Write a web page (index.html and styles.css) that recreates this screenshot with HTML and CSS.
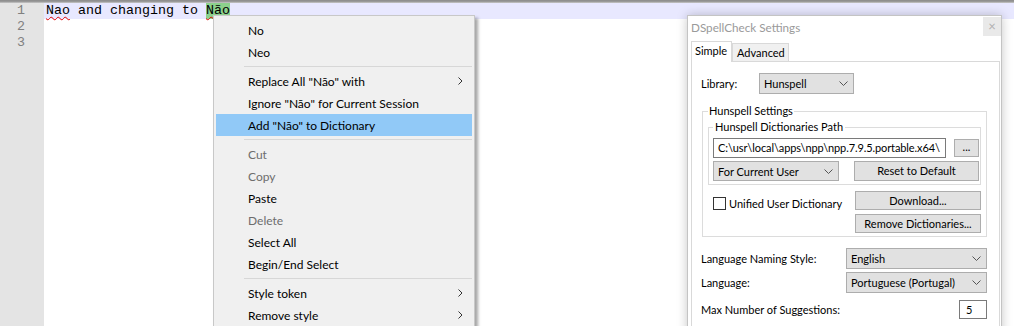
FILE: index.html
```html
<!DOCTYPE html>
<html>
<head>
<meta charset="utf-8">
<link rel="stylesheet" href="styles.css">
</head>
<body>
<div class="topbar"></div>
<div class="editor">
  <div class="gutter">
    <div class="ln">1</div>
    <div class="ln">2</div>
    <div class="ln">3</div>
  </div>
  <div class="code">
    <div class="line cur"><span class="err">Nao</span> and changing to <span class="hl"><span class="err">Não</span></span></div>
    <div class="line"></div>
    <div class="line"></div>
  </div>
</div>

<div class="menu">
  <div class="mi">No</div>
  <div class="mi">Neo</div>
  <div class="sep"></div>
  <div class="mi">Replace All "Não" with<svg class="arr" width="5" height="8" viewBox="0 0 5 8"><polyline points="0.5,0.5 4,4 0.5,7.5" fill="none" stroke="#333" stroke-width="1"/></svg></div>
  <div class="mi">Ignore "Não" for Current Session</div>
  <div class="mi sel">Add "Não" to Dictionary</div>
  <div class="sep"></div>
  <div class="mi dis">Cut</div>
  <div class="mi dis">Copy</div>
  <div class="mi">Paste</div>
  <div class="mi dis">Delete</div>
  <div class="mi">Select All</div>
  <div class="mi">Begin/End Select</div>
  <div class="sep"></div>
  <div class="mi">Style token<svg class="arr" width="5" height="8" viewBox="0 0 5 8"><polyline points="0.5,0.5 4,4 0.5,7.5" fill="none" stroke="#333" stroke-width="1"/></svg></div>
  <div class="mi">Remove style<svg class="arr" width="5" height="8" viewBox="0 0 5 8"><polyline points="0.5,0.5 4,4 0.5,7.5" fill="none" stroke="#333" stroke-width="1"/></svg></div>
</div>

<div class="dlg">
  <div class="titlebar">
    <div class="title">DSpellCheck Settings</div>
    <div class="close">×</div>
  </div>
  <div class="tabs">
    <div class="tab sel">Simple</div>
    <div class="tab adv">Advanced</div>
  </div>
  <div class="panel">
    <div class="row-lib">
      <div class="lib-label">Library:</div>
      <div class="combo lib-combo"><span>Hunspell</span><svg class="chev" width="9" height="5" viewBox="0 0 9 5"><polyline points="0.5,0.5 4.5,4.5 8.5,0.5" fill="none" stroke="#555" stroke-width="1"/></svg></div>
    </div>
    <fieldset class="grp outer">
      <legend>Hunspell Settings</legend>
      <fieldset class="grp inner">
        <legend>Hunspell Dictionaries Path</legend>
        <div class="path-row">
          <div class="input path">C:\usr\local\apps\npp\npp.7.9.5.portable.x64\</div>
          <div class="btn dots">...</div>
        </div>
        <div class="user-row">
          <div class="combo user-combo"><span>For Current User</span><svg class="chev" width="9" height="5" viewBox="0 0 9 5"><polyline points="0.5,0.5 4.5,4.5 8.5,0.5" fill="none" stroke="#555" stroke-width="1"/></svg></div>
          <div class="btn reset">Reset to Default</div>
        </div>
      </fieldset>
      <div class="dl-row">
        <div class="chk-wrap"><div class="chk"></div><span>Unified User Dictionary</span></div>
        <div class="btn-col">
          <div class="btn wide">Download...</div>
          <div class="btn wide">Remove Dictionaries...</div>
        </div>
      </div>
    </fieldset>
    <div class="opt-row first">
      <div>Language Naming Style:</div>
      <div class="combo opt-combo"><span>English</span><svg class="chev" width="9" height="5" viewBox="0 0 9 5"><polyline points="0.5,0.5 4.5,4.5 8.5,0.5" fill="none" stroke="#555" stroke-width="1"/></svg></div>
    </div>
    <div class="opt-row second">
      <div>Language:</div>
      <div class="combo opt-combo"><span>Portuguese (Portugal)</span><svg class="chev" width="9" height="5" viewBox="0 0 9 5"><polyline points="0.5,0.5 4.5,4.5 8.5,0.5" fill="none" stroke="#555" stroke-width="1"/></svg></div>
    </div>
    <div class="opt-row third">
      <div>Max Number of Suggestions:</div>
      <div class="input num">5</div>
    </div>
  </div>
</div>
</body>
</html>
```

FILE: styles.css
```css
html, body {
  margin: 0;
  padding: 0;
}
body {
  width: 1014px;
  height: 326px;
  overflow: hidden;
  position: relative;
  background: #fff;
  font-family: Lato, "Noto Sans", sans-serif;
  font-size: 12px;
  color: #000;
}
.topbar {
  height: 3px;
  background: linear-gradient(#8a8a8a, #9c9c9c 60%, #cfcfcf);
}
.editor {
  display: flex;
  height: 323px;
}
.gutter {
  width: 44px;
  background: #e4e4e4;
  font-family: "Liberation Mono", monospace;
  font-size: 13.33px;
  color: #808080;
}
.ln {
  width: 25px;
  height: 16px;
  line-height: 16px;
  text-align: right;
}
.code {
  flex: 1;
  font-family: "Liberation Mono", monospace;
  font-size: 13.33px;
  color: #000;
}
.line {
  height: 16px;
  line-height: 16px;
  padding-left: 2px;
  white-space: pre;
}
.line.cur {
  background: #e8e8ff;
}
.hl {
  background: #8cd18c;
  display: inline-block;
  height: 16px;
}
.err {
  text-decoration: underline wavy #e00000;
  text-decoration-thickness: 1px;
  text-underline-offset: 2px;
}

/* context menu */
.menu {
  position: absolute;
  left: 213px;
  top: 15px;
  width: 262px;
  height: 330px;
  box-sizing: border-box;
  background: #f0f0f0;
  border: 1px solid #c8c8c8;
  padding: 3px 2px;
  box-shadow: 3px 3px 3px rgba(0, 0, 0, 0.35);
}
.mi {
  height: 22px;
  display: flex;
  align-items: center;
  justify-content: space-between;
  padding: 0 9px 0 32px;
  white-space: nowrap;
}
.mi.sel {
  background: #91c9f7;
}
.mi.dis {
  color: #6d6d6d;
}
.sep {
  height: 1px;
  background: #d7d7d7;
  margin: 3px 0 3px 28px;
}
.arr {
  display: block;
}

/* dialog */
.dlg {
  position: absolute;
  left: 687px;
  top: 15px;
  width: 315px;
  height: 330px;
  box-sizing: border-box;
  background: #fff;
  border: 1px solid #c4c4c4;
  box-shadow: 0 0 10px rgba(0, 0, 0, 0.22);
  font-size: 11px;
}
.titlebar {
  height: 25px;
  display: flex;
  justify-content: space-between;
  align-items: flex-start;
  padding-left: 3px;
}
.title {
  line-height: 22px;
  font-size: 11.7px;
  color: #9a9a9a;
}
.close {
  width: 18px;
  height: 19px;
  margin-top: 1px;
  background: #e9e9e9;
  color: #b0b0b0;
  font-size: 13px;
  line-height: 18px;
  text-align: center;
}
.tabs {
  display: flex;
  align-items: flex-end;
  height: 20px;
  padding-left: 3px;
}
.tab {
  box-sizing: border-box;
  border: 1px solid #d9d9d9;
  border-bottom: none;
  white-space: nowrap;
}
.tab.sel {
  position: relative;
  z-index: 1;
  width: 41px;
  height: 21px;
  margin-bottom: -1px;
  padding-left: 3px;
  line-height: 18px;
  background: #fff;
}
.tab.adv {
  width: 57px;
  height: 18px;
  padding-left: 4px;
  line-height: 17px;
  background: #f0f0f0;
}
.panel {
  margin-left: 3px;
  width: 309px;
  height: 280px;
  box-sizing: border-box;
  border: 1px solid #d9d9d9;
  background: #fff;
  padding: 11px 12px 0 9px;
}
.row-lib {
  display: flex;
  align-items: center;
}
.lib-label {
  width: 58px;
}
.combo {
  box-sizing: border-box;
  display: flex;
  align-items: center;
  justify-content: space-between;
  background: #e1e1e1;
  border: 1px solid #adadad;
  padding: 0 5px 0 4px;
  white-space: nowrap;
}
.chev {
  display: block;
}
.lib-combo {
  width: 95px;
  height: 21px;
}
.grp {
  border: 1px solid #dcdcdc;
  margin: 0;
  min-width: 0;
}
.grp legend {
  padding: 0 1px;
  line-height: 16px;
}
.outer {
  margin: 9px 0 0 1px;
  padding: 0 5px 3px 5px;
}
.inner {
  padding: 3px 1px 3px 4px;
}
.inner legend {
  padding: 0 2px;
}
.path-row, .user-row {
  display: flex;
  justify-content: space-between;
  align-items: center;
}
.user-row {
  margin-top: 3px;
}
.input {
  box-sizing: border-box;
  background: #fff;
  border: 1px solid #7a7a7a;
  white-space: nowrap;
  overflow: hidden;
}
.path {
  width: 233px;
  height: 20px;
  line-height: 18px;
  padding-left: 4px;
  letter-spacing: -0.1px;
}
.btn {
  box-sizing: border-box;
  background: #e1e1e1;
  border: 1px solid #adadad;
  text-align: center;
  white-space: nowrap;
}
.dots {
  width: 25px;
  height: 18px;
  line-height: 14px;
}
.user-combo {
  width: 126px;
  height: 20px;
}
.reset {
  width: 125px;
  height: 20px;
  line-height: 18px;
}
.dl-row {
  display: flex;
  justify-content: space-between;
  margin-top: 6px;
}
.chk-wrap {
  display: flex;
  align-items: center;
  margin: 6px 0 0 5px;
  height: 13px;
}
.chk {
  width: 13px;
  height: 13px;
  box-sizing: border-box;
  border: 1px solid #333;
  background: #fff;
  margin-right: 3px;
}
.btn-col {
  display: flex;
  flex-direction: column;
  gap: 4px;
}
.wide {
  width: 126px;
  height: 19px;
  line-height: 17px;
}
.opt-row {
  display: flex;
  justify-content: space-between;
  align-items: center;
  white-space: nowrap;
}
.opt-row.first {
  margin-top: 11px;
}
.opt-row.second {
  margin-top: 3px;
}
.opt-row.third {
  margin-top: 7px;
}
.opt-combo {
  width: 141px;
  height: 21px;
}
.num {
  width: 28px;
  height: 19px;
  line-height: 17px;
  padding-left: 6px;
}
```
